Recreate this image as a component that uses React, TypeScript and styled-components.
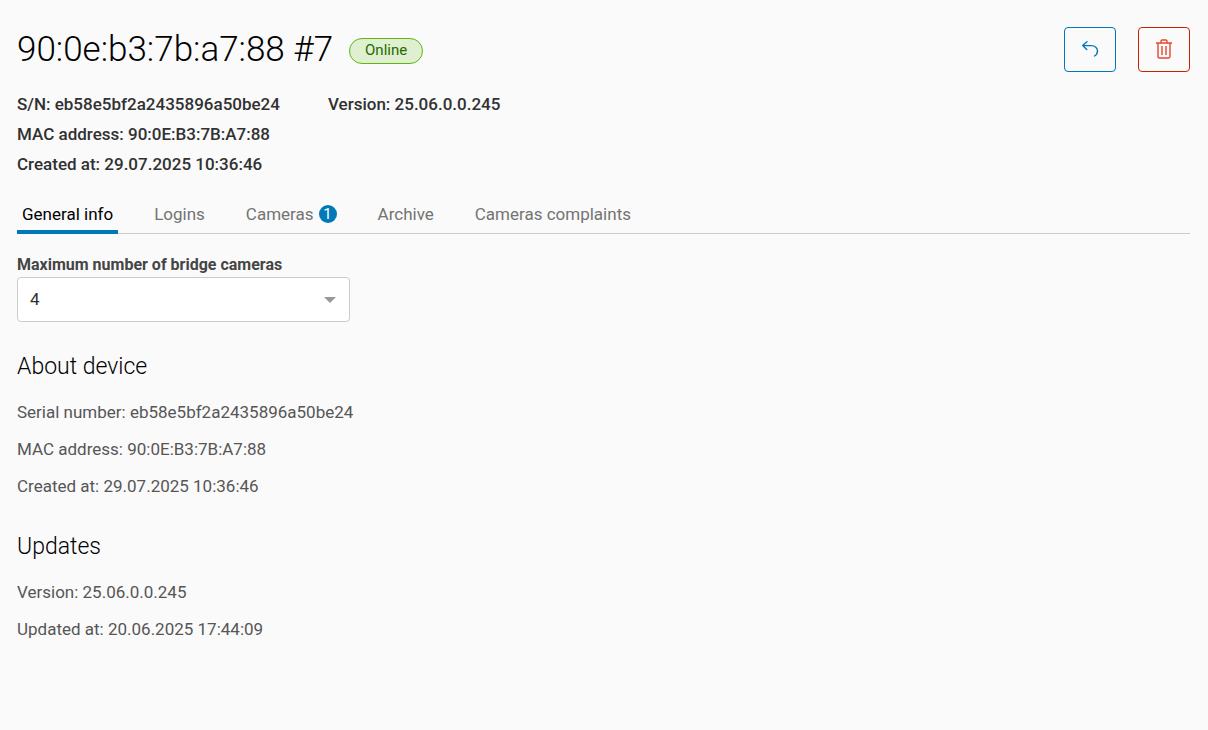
import React from 'react';
import styled, { createGlobalStyle, css } from 'styled-components';

const GlobalStyle = createGlobalStyle`
  *, *::before, *::after { box-sizing: border-box; }
  body {
    margin: 0;
    background: #fafafa;
    color: #313131;
    font-family: Roboto, "Liberation Sans", sans-serif;
    font-size: 17px;
  }
`;

const Page = styled.main`
  padding: 24px 18px 24px 17px;
`;

const Header = styled.header`
  display: flex;
  align-items: center;
  justify-content: space-between;
  height: 50px;
`;

const TitleGroup = styled.div`
  display: flex;
  align-items: center;
  gap: 16px;
`;

const Title = styled.h1`
  margin: 0;
  padding-top: 2px;
  color: #000;
  font-size: 35px;
  line-height: 48px;
  font-weight: 300;
`;

const Status = styled.span`
  margin-top: 4px;
  padding: 0 15px 2px;
  border: 1px solid #60b515;
  border-radius: 13px;
  background: #dff0d0;
  color: #266900;
  font-size: 15px;
  line-height: 22px;
`;

const Actions = styled.div`
  display: flex;
  gap: 22px;
`;

const IconButton = styled.button<{ $danger?: boolean }>`
  display: flex;
  align-items: center;
  justify-content: center;
  width: 52px;
  height: 45px;
  padding: 0;
  border: 1px solid ${p => (p.$danger ? '#c92100' : '#0079b8')};
  border-radius: 4px;
  background: transparent;
  color: ${p => (p.$danger ? '#e8452c' : '#0079b8')};
  cursor: pointer;
`;

const Summary = styled.div`
  padding-top: 15px;
  font-weight: 500;
  line-height: 30px;
`;

const SummaryRow = styled.div`
  display: flex;
  gap: 48px;
`;

const Tabs = styled.div`
  display: flex;
  gap: 31px;
  margin-top: 15px;
  border-bottom: 1px solid #ccc;
`;

const Tab = styled.button<{ $active?: boolean }>`
  display: flex;
  align-items: center;
  gap: 5px;
  height: 40px;
  margin: 0 0 -1px;
  padding: 0 5px;
  border: 0;
  background: none;
  color: #737373;
  font: inherit;
  cursor: pointer;
  ${p => p.$active && css`
    color: #000;
    box-shadow: inset 0 -4px #0079b8;
  `}
`;

const Badge = styled.span`
  min-width: 18px;
  border-radius: 9px;
  background: #0079b8;
  color: #fff;
  font-size: 15px;
  line-height: 18px;
  text-align: center;
`;

const Label = styled.label`
  display: block;
  margin-top: 19px;
  padding-bottom: 1px;
  color: #454545;
  font-size: 16px;
  line-height: 23px;
  font-weight: 700;
`;

const SelectBox = styled.div`
  display: grid;
  align-items: center;
  max-width: 333px;
  > * { grid-area: 1 / 1; }
`;

const Select = styled.select`
  appearance: none;
  width: 100%;
  height: 45px;
  padding: 0 40px 2px 12px;
  border: 1px solid #ccc;
  border-radius: 4px;
  background: #fff;
  color: #313131;
  font: inherit;
`;

const Arrow = styled.svg`
  justify-self: end;
  margin-right: 14px;
  pointer-events: none;
`;

const Section = styled.section`
  margin-top: 30px;
`;

const SectionTitle = styled.h2`
  margin: 0 0 15px;
  color: #000;
  font-size: 23px;
  line-height: 30px;
  font-weight: 300;
`;

const Details = styled.div`
  display: grid;
  gap: 7px;
  padding-bottom: 1px;
`;

const Detail = styled.p`
  margin: 0;
  color: #565656;
  line-height: 30px;
`;

export default function App() {
  return (
    <>
      <GlobalStyle />
      <Page>
        <Header>
          <TitleGroup>
            <Title>90:0e:b3:7b:a7:88 #7</Title>
            <Status>Online</Status>
          </TitleGroup>
          <Actions>
            <IconButton aria-label="Back">
              <svg width="18" height="17" viewBox="0 0 18 17" fill="none" stroke="currentColor" strokeWidth="1.4" strokeLinecap="round" strokeLinejoin="round">
                <path d="M6 .8 1.700 4.600l4 4M1.700 4.600h8.800c3.500 0 6 2.400 6 5.400 0 2-1 3.800-3 5" />
              </svg>
            </IconButton>
            <IconButton $danger aria-label="Delete">
              <svg width="18" height="21" viewBox="0 0 18 21" fill="none" stroke="currentColor" strokeWidth="1.4">
                <path d="M1 4h16M6 4V2.200a1.200 1.200 0 0 1 1.200-1.200h3.600A1.200 1.200 0 0 1 12 2.200V4M3 4v13.200A1.800 1.800 0 0 0 4.800 19h8.400a1.800 1.800 0 0 0 1.800-1.800V4M7 7v9M11 7v9" />
              </svg>
            </IconButton>
          </Actions>
        </Header>
        <Summary>
          <SummaryRow>
            <span>S/N: eb58e5bf2a2435896a50be24</span>
            <span>Version: 25.06.0.0.245</span>
          </SummaryRow>
          <SummaryRow>MAC address: 90:0E:B3:7B:A7:88</SummaryRow>
          <SummaryRow>Created at: 29.07.2025 10:36:46</SummaryRow>
        </Summary>
        <Tabs role="tablist">
          <Tab role="tab" aria-selected="true" $active>General info</Tab>
          <Tab role="tab">Logins</Tab>
          <Tab role="tab">Cameras <Badge>1</Badge></Tab>
          <Tab role="tab">Archive</Tab>
          <Tab role="tab">Cameras complaints</Tab>
        </Tabs>
        <Label htmlFor="max-cameras">Maximum number of bridge cameras</Label>
        <SelectBox>
          <Select id="max-cameras" defaultValue="4">
            <option>4</option>
          </Select>
          <Arrow width="12" height="6" viewBox="0 0 12 6" aria-hidden="true">
            <path d="M0 0h12L6 6z" fill="#999" />
          </Arrow>
        </SelectBox>
        <Section>
          <SectionTitle>About device</SectionTitle>
          <Details>
            <Detail>Serial number: eb58e5bf2a2435896a50be24</Detail>
            <Detail>MAC address: 90:0E:B3:7B:A7:88</Detail>
            <Detail>Created at: 29.07.2025 10:36:46</Detail>
          </Details>
        </Section>
        <Section>
          <SectionTitle>Updates</SectionTitle>
          <Details>
            <Detail>Version: 25.06.0.0.245</Detail>
            <Detail>Updated at: 20.06.2025 17:44:09</Detail>
          </Details>
        </Section>
      </Page>
    </>
  );
}
